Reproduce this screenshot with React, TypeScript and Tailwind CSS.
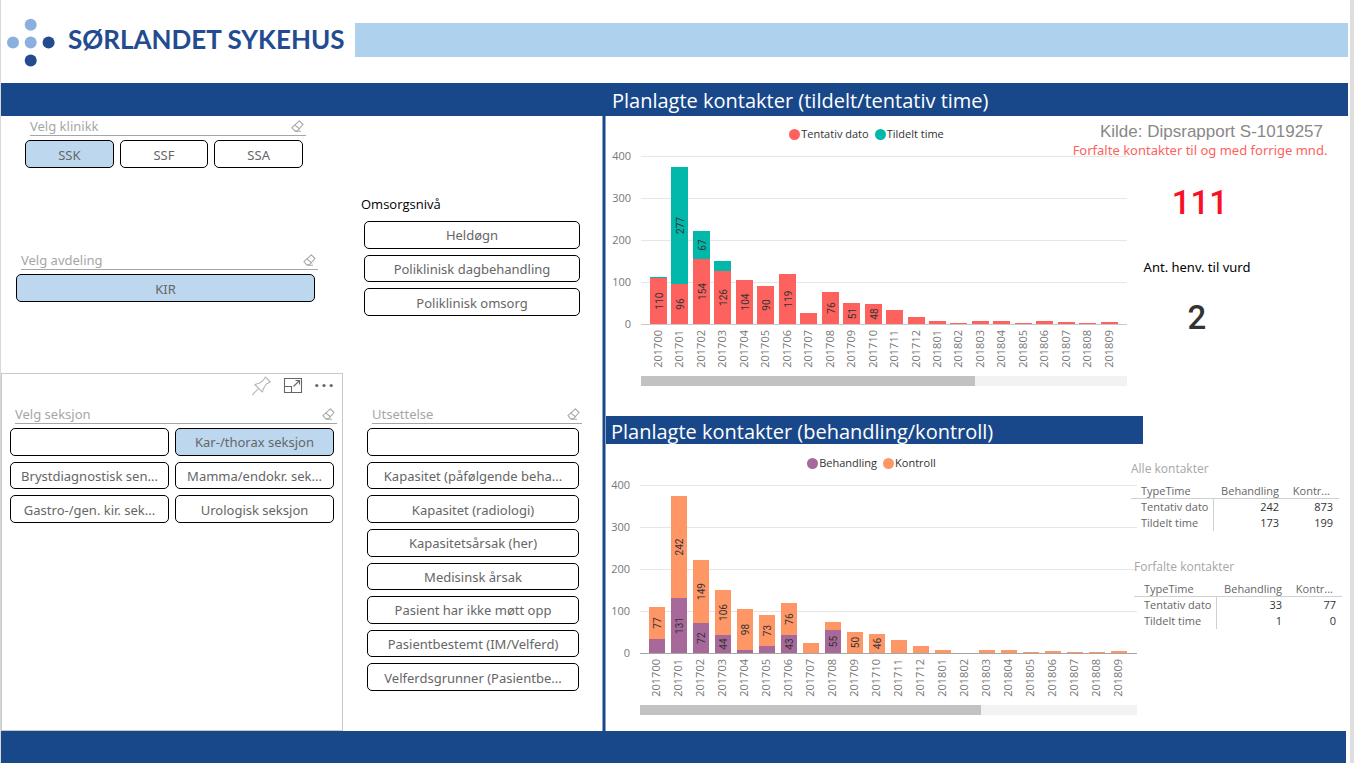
import React, { useState } from "react";
import clsx from "clsx";

type Row = { month: string; lower: number; upper: number; lowerLabel?: boolean; upperLabel?: boolean };

const months = [
  "201700", "201701", "201702", "201703", "201704", "201705", "201706", "201707",
  "201708", "201709", "201710", "201711", "201712", "201801", "201802", "201803",
  "201804", "201805", "201806", "201807", "201808", "201809",
];

// values under this are too short to carry a label
const MIN_LABEL = 43;

const toRows = (lower: number[], upper: number[]): Row[] =>
  months.map((month, i) => ({
    month,
    lower: lower[i],
    upper: upper[i],
    lowerLabel: lower[i] >= MIN_LABEL,
    upperLabel: upper[i] >= MIN_LABEL,
  }));

const timeRows = toRows(
  [110, 96, 154, 126, 104, 90, 119, 26, 76, 51, 48, 33, 16, 7, 2, 7, 7, 2, 7, 4, 2, 4],
  [2, 277, 67, 25, 0, 0, 0, 0, 0, 0, 0, 0, 0, 0, 0, 0, 0, 0, 0, 0, 0, 0]
);

const treatmentRows = toRows(
  [33, 131, 72, 44, 7, 17, 43, 0, 55, 0, 0, 0, 0, 0, 0, 0, 0, 0, 0, 0, 0, 0],
  [77, 242, 149, 106, 98, 73, 76, 24, 19, 50, 46, 31, 17, 7, 0, 7, 7, 3, 5, 3, 3, 5]
);

function EraserIcon() {
  return (
    <svg width="13" height="12" viewBox="0 0 13 12" fill="none" stroke="#a8a8a8" strokeWidth="1.1">
      <path d="M8.3 .8 12 4.5 6.4 10.8H3.8L.9 7.6Z" strokeLinejoin="round" />
      <path d="M3.6 4.9 8.7 9M3.8 11.2H10" />
    </svg>
  );
}

function Slicer({
  title,
  items,
  initial,
  gridClass,
}: {
  title: string;
  items: string[];
  initial?: string;
  gridClass: string;
}) {
  const [selected, setSelected] = useState<string | undefined>(initial);

  return (
    <section>
      <div className="ml-[5px] -mr-[3px] mb-1 flex h-5 items-center justify-between border-b border-[#a6a6a6] pr-0.5 pt-px">
        <h2 className="font-['Noto_Sans',sans-serif] text-[13px] leading-[18px] text-[#a6a6a6]">{title}</h2>
        <button aria-label={`Fjern valg: ${title}`} onClick={() => setSelected(undefined)}>
          <EraserIcon />
        </button>
      </div>
      <SlicerButtons items={items} selected={selected} onSelect={setSelected} gridClass={gridClass} />
    </section>
  );
}

function SlicerButtons({
  items,
  selected,
  onSelect,
  gridClass,
}: {
  items: string[];
  selected?: string;
  onSelect: (item: string) => void;
  gridClass: string;
}) {
  return (
    <div className={clsx("grid auto-rows-fr gap-1.5", gridClass)}>
      {items.map((item) => (
        <button
          key={item}
          aria-label={item || "Tom"}
          aria-pressed={selected === item}
          onClick={() => onSelect(item)}
          className={clsx(
            "min-w-0 overflow-hidden whitespace-nowrap rounded-[5px] border border-black pt-px font-['Noto_Sans',sans-serif] text-[13px] leading-[18px] text-[#666666]",
            selected === item ? "bg-[#bdd7ee]" : "bg-white"
          )}
        >
          {item}
        </button>
      ))}
    </div>
  );
}

function StackedChart({
  rows,
  series,
  width,
  left,
  firstBar,
  step,
  barWidth,
  thumb,
  axisColor,
}: {
  rows: Row[];
  series: { name: string; color: string }[];
  width: number;
  left: number;
  firstBar: number;
  step: number;
  barWidth: number;
  thumb: number;
  axisColor: string;
}) {
  const base = 180;
  const y = (value: number) => base - value * 0.42;

  return (
    <div className="min-w-0 flex-1">
      <div className="flex h-7 items-center justify-center gap-1.5 pt-2">
        {series.map((s) => (
          <span key={s.name} className="flex items-center gap-px text-[11px] leading-4 text-[#333333]">
            <span className="size-[11px] rounded-full" style={{ backgroundColor: s.color }} />
            {s.name}
          </span>
        ))}
      </div>
      <svg viewBox={`0 0 ${width} 244`} className="block h-auto w-full">
        {[100, 200, 300, 400].map((v) => (
          <rect key={v} x={left} y={Math.round(y(v))} width={width - left} height="1" fill="#e6e6e6" />
        ))}
        {[0, 100, 200, 300, 400].map((v) => (
          <text key={v} x={left - 10} y={y(v) + 4} textAnchor="end" fontSize="11" fill="#777777">
            {v}
          </text>
        ))}
        <rect x={left} y={base} width={width - left} height="1" fill={axisColor} />
        {rows.map((row, i) => {
          const x = Math.round(firstBar + i * step);
          const mid = x + barWidth / 2;
          const seam = Math.round(y(row.lower));
          const top = Math.round(y(row.lower + row.upper));
          return (
            <g key={row.month}>
              <rect x={x} y={seam} width={barWidth} height={base - seam} fill={series[0].color} />
              <rect x={x} y={top} width={barWidth} height={seam - top} fill={series[1].color} />
              {row.lowerLabel && <BarLabel x={mid} y={(seam + base) / 2} value={row.lower} />}
              {row.upperLabel && <BarLabel x={mid} y={(seam + top) / 2} value={row.upper} />}
              <text
                transform={`translate(${mid + 3} 186) rotate(-90)`}
                textAnchor="end"
                fontSize="11"
                fill="#777777"
              >
                {row.month}
              </text>
            </g>
          );
        })}
        <rect x={left} y="232" width={width - left} height="10" fill="#f2f2f2" />
        <rect x={left} y="232" width={thumb} height="10" fill="#c2c2c2" />
      </svg>
    </div>
  );
}

function BarLabel({ x, y, value }: { x: number; y: number; value: number }) {
  return (
    <text
      transform={`translate(${x + 4} ${y}) rotate(-90)`}
      textAnchor="middle"
      fontSize="10"
      fill="#333333"
      className="font-['Roboto',sans-serif]"
    >
      {value}
    </text>
  );
}

function ContactTable({ title, rows }: { title: string; rows: [string, number, number][] }) {
  return (
    <table className="w-[208px] table-fixed text-[11px] leading-4 text-[#666666]">
      <caption className="h-[23px] text-left text-[12px] leading-4 text-[#a6a6a6]">{title}</caption>
      <colgroup>
        <col className="w-[82px]" />
        <col className="w-[72px]" />
        <col />
      </colgroup>
      <thead>
        <tr className="border-b border-[#d0d0d0]">
          <th className="h-[14px] p-0 pl-[10px] text-left font-normal leading-[14px]">TypeTime</th>
          <th className="p-0 pr-[6px] text-right font-normal leading-[14px]">Behandling</th>
          <th className="p-0 pr-[9px] text-right font-normal leading-[14px]">Kontr...</th>
        </tr>
      </thead>
      <tbody>
        {rows.map(([name, treatment, control]) => (
          <tr key={name}>
            <th className="whitespace-nowrap border-r border-[#d0d0d0] p-0 pl-[10px] text-left font-normal">{name}</th>
            <td className="p-0 pr-[6px] text-right text-[#333333]">{treatment}</td>
            <td className="p-0 pr-[6px] text-right text-[#333333]">{control}</td>
          </tr>
        ))}
      </tbody>
    </table>
  );
}

function CardToolbar() {
  return (
    <div className="flex h-[30px] items-start justify-end gap-3 pr-[9px] pt-0.5 text-[#666666]">
      <button aria-label="Fest">
        <svg width="20" height="20" viewBox="0 0 20 20" fill="none" stroke="#b8b8b8" strokeWidth="1.1">
          <path d="M14.3 1 19.3 6 15.3 8 12.8 12 11.3 16 3.8 8.5 8 7.2 12 4.8Z" strokeLinejoin="round" />
          <path d="M7.6 12.3 1.3 19" />
        </svg>
      </button>
      <button aria-label="Fokusmodus">
        <svg width="20" height="18" viewBox="0 0 20 18" fill="none" stroke="currentColor" strokeWidth="1.1">
          <path d="M1.5 2.5H18.5V16.5H1.5Z" />
          <path d="M1.5 10.5H8.5V16.5M10.5 10.5 16.5 4.5M12.5 4.5H16.5V8.5" />
        </svg>
      </button>
      <button aria-label="Flere alternativer">
        <svg width="18" height="18" viewBox="0 0 18 18" fill="currentColor">
          <circle cx="1.8" cy="9.5" r="1.6" />
          <circle cx="9" cy="9.5" r="1.6" />
          <circle cx="16.2" cy="9.5" r="1.6" />
        </svg>
      </button>
    </div>
  );
}

function CareLevel() {
  const [selected, setSelected] = useState<string>();

  return (
    <section className="pt-[79px]">
      <h2 className="-ml-[3px] mb-2 text-[13px] leading-[18px] text-black">Omsorgsnivå</h2>
      <SlicerButtons
        items={["Heldøgn", "Poliklinisk dagbehandling", "Poliklinisk omsorg"]}
        selected={selected}
        onSelect={setSelected}
        gridClass="h-[95px]"
      />
    </section>
  );
}

export default function App() {
  return (
    <div className="flex min-h-screen flex-col border-l border-r-4 border-l-[#d9d9d9] border-r-[#dedede] bg-white font-['Open_Sans','Noto_Sans',sans-serif]">
      <header className="flex h-[83px] items-start pr-0.5">
        <svg width="50" height="50" viewBox="0 0 50 50" className="ml-[5px] mt-[18px] shrink-0">
          <circle cx="24.7" cy="6.8" r="6" fill="#8cb0de" />
          <circle cx="7" cy="24.5" r="6" fill="#8cb0de" />
          <circle cx="24.7" cy="24.5" r="6" fill="#8cb0de" />
          <circle cx="42.6" cy="24.5" r="6" fill="#234b90" />
          <circle cx="24.7" cy="42.5" r="6" fill="#234b90" />
        </svg>
        <h1 className="ml-3 mt-[23px] w-[287px] shrink-0 whitespace-nowrap font-['Lato',sans-serif] text-[26px] font-bold leading-8 text-[#234b90]">
          SØRLANDET SYKEHUS
        </h1>
        <div className="mt-[23px] h-[34px] flex-1 bg-[#aed1ed]" />
      </header>

      <div className="mr-0.5 flex h-[33px] bg-[#19488a] pl-[611px]">
        <h2 className="whitespace-nowrap pt-1 text-[20px] leading-7 text-white">
          Planlagte kontakter (tildelt/tentativ time)
        </h2>
      </div>

      <main className="flex flex-1">
        <div className="flex w-[342px] shrink-0 flex-col">
          <div className="ml-6 w-[278px]">
            <Slicer title="Velg klinikk" items={["SSK", "SSF", "SSA"]} initial="SSK" gridClass="h-7 grid-cols-3" />
          </div>
          <div className="ml-[15px] mt-[82px] w-[299px]">
            <Slicer title="Velg avdeling" items={["KIR"]} initial="KIR" gridClass="h-7" />
          </div>
          <div className="mt-[71px] flex-1 border border-[#c8c8c8]">
            <CardToolbar />
            <div className="ml-2 w-[324px]">
              <Slicer
                title="Velg seksjon"
                items={[
                  "",
                  "Kar-/thorax seksjon",
                  "Brystdiagnostisk sen...",
                  "Mamma/endokr. sek...",
                  "Gastro-/gen. kir. sek...",
                  "Urologisk seksjon",
                ]}
                initial="Kar-/thorax seksjon"
                gridClass="h-[95px] grid-cols-2"
              />
            </div>
          </div>
        </div>

        <div className="flex w-[259px] shrink-0 flex-col">
          <div className="ml-[21px] w-[216px]">
            <CareLevel />
          </div>
          <div className="ml-6 mt-[88px] w-[212px]">
            <Slicer
              title="Utsettelse"
              items={[
                "",
                "Kapasitet (påfølgende beha...",
                "Kapasitet (radiologi)",
                "Kapasitetsårsak (her)",
                "Medisinsk årsak",
                "Pasient har ikke møtt opp",
                "Pasientbestemt (IM/Velferd)",
                "Velferdsgrunner (Pasientbe...",
              ]}
              gridClass="h-[263px]"
            />
          </div>
        </div>

        <div className="w-1 shrink-0 border-x border-[#8ba4c8] bg-[#19488a]" />

        <div className="min-w-0 flex-1">
          <section className="flex pb-7">
            <StackedChart
              rows={timeRows}
              series={[
                { name: "Tentativ dato", color: "#fd625e" },
                { name: "Tildelt time", color: "#01b8aa" },
              ]}
              width={521}
              left={35}
              firstBar={44}
              step={21.46}
              barWidth={17}
              thumb={334}
              axisColor="#c8c8c8"
            />
            <aside className="-ml-[57px] mr-5 flex w-[260px] shrink-0 flex-col items-center pt-[7px]">
              <p className="self-end whitespace-nowrap pr-[7px] font-['Liberation_Sans',sans-serif] text-[17px] leading-[18px] text-[#888888]">
                Kilde: Dipsrapport S-1019257
              </p>
              <h3 className="whitespace-nowrap font-['Noto_Sans',sans-serif] text-[13px] leading-[18px] text-[#fd625e]">
                Forfalte kontakter til og med forrige mnd.
              </h3>
              <p className="mt-6 font-['Roboto',sans-serif] text-[33px] font-medium leading-10 text-[#fb0f27]">111</p>
              <h3 className="mt-[35px] pr-1.5 font-['Noto_Sans',sans-serif] text-[13px] leading-[18px] text-black">
                Ant. henv. til vurd
              </h3>
              <p className="mt-[22px] pr-1.5 font-['Roboto',sans-serif] text-[33px] font-medium leading-10 text-[#333333]">
                2
              </p>
            </aside>
          </section>

          <div className="mr-[207px] h-7 bg-[#19488a] pl-[5px]">
            <h2 className="whitespace-nowrap pt-0.5 text-[20px] leading-7 text-white">
              Planlagte kontakter (behandling/kontroll)
            </h2>
          </div>
          <section className="flex pt-px">
            <StackedChart
              rows={treatmentRows}
              series={[
                { name: "Behandling", color: "#a66999" },
                { name: "Kontroll", color: "#fe9666" },
              ]}
              width={531}
              left={34}
              firstBar={43}
              step={22}
              barWidth={16}
              thumb={341}
              axisColor="#a6a6a6"
            />
            <aside className="-ml-[6px] mr-[7px] w-[212px] shrink-0 pt-4">
              <ContactTable
                title="Alle kontakter"
                rows={[
                  ["Tentativ dato", 242, 873],
                  ["Tildelt time", 173, 199],
                ]}
              />
              <div className="ml-[3px] mt-7">
                <ContactTable
                  title="Forfalte kontakter"
                  rows={[
                    ["Tentativ dato", 33, 77],
                    ["Tildelt time", 1, 0],
                  ]}
                />
              </div>
            </aside>
          </section>
        </div>
      </main>

      <footer className="mr-1 h-8 bg-[#19488a]" />
    </div>
  );
}
